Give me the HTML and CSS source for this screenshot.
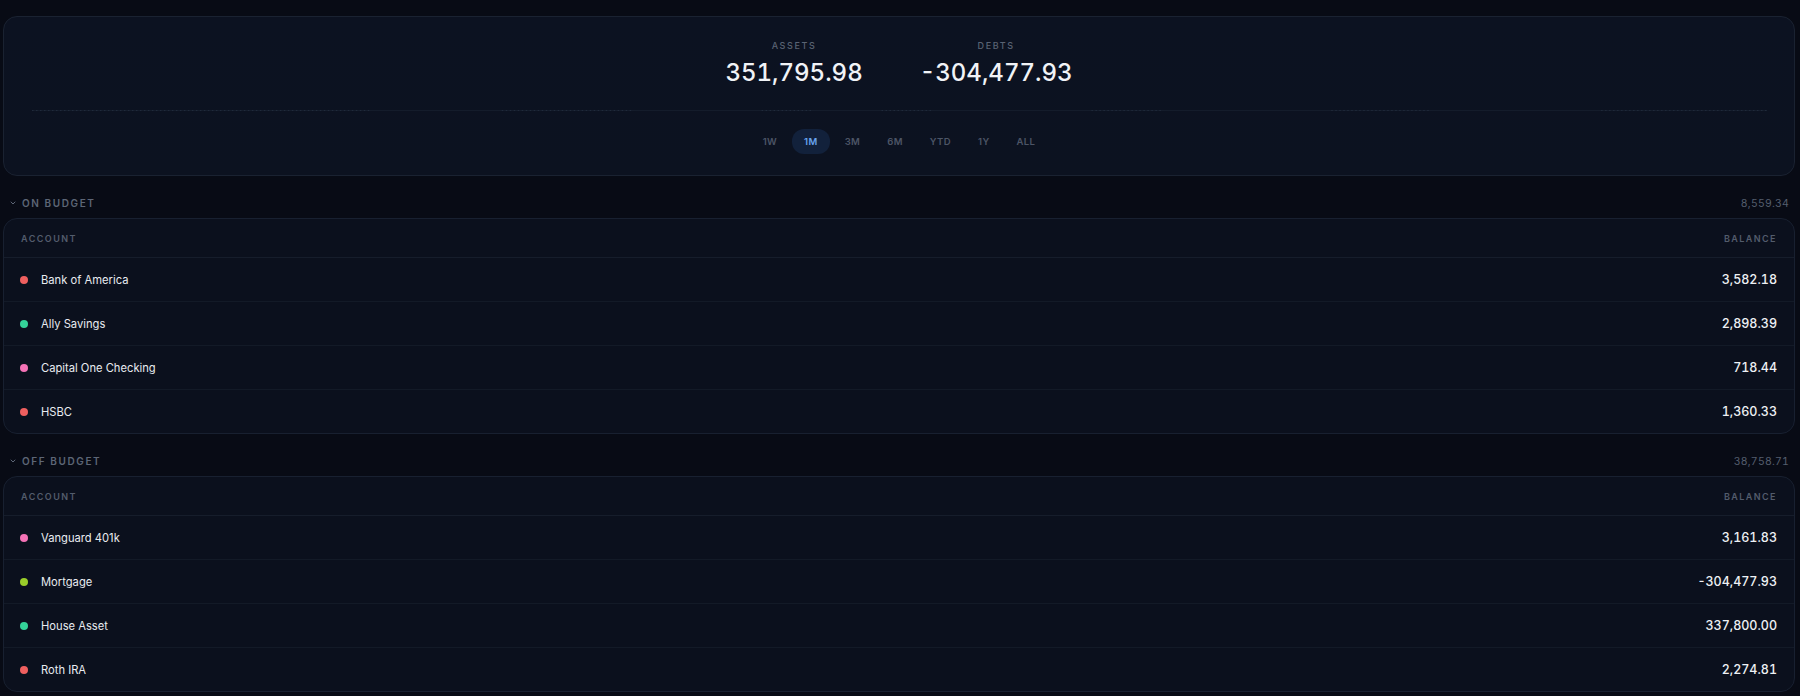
FILE: index.html
```html
<!DOCTYPE html>
<html lang="en">
<head>
<meta charset="utf-8">
<title>Accounts</title>
<link rel="stylesheet" href="styles.css">
</head>
<body>
<main class="page">
  <section class="summary">
    <div class="stats">
      <div class="stat">
        <div class="stat-label">ASSETS</div>
        <div class="stat-value">351,795.98</div>
      </div>
      <div class="stat">
        <div class="stat-label">DEBTS</div>
        <div class="stat-value">-304,477.93</div>
      </div>
    </div>
    <div class="chart">
      <svg class="chart-svg" viewBox="0 0 1736 3" preserveAspectRatio="none">
        <line x1="0" y1="1.5" x2="1736" y2="1.5" class="base"/>
        <line x1="0" y1="1.5" x2="340" y2="1.5" class="dots"/>
        <line x1="470" y1="1.5" x2="600" y2="1.5" class="dots"/>
        <line x1="730" y1="1.5" x2="780" y2="1.5" class="dots"/>
        <line x1="850" y1="1.5" x2="900" y2="1.5" class="dots"/>
        <line x1="1060" y1="1.5" x2="1130" y2="1.5" class="dots"/>
        <line x1="1300" y1="1.5" x2="1400" y2="1.5" class="dots"/>
        <line x1="1570" y1="1.5" x2="1736" y2="1.5" class="dots"/>
      </svg>
    </div>
    <nav class="periods">
      <button class="period">1W</button>
      <button class="period active">1M</button>
      <button class="period">3M</button>
      <button class="period">6M</button>
      <button class="period">YTD</button>
      <button class="period">1Y</button>
      <button class="period">ALL</button>
    </nav>
  </section>

  <section class="group">
    <header class="group-head">
      <div class="group-title">
        <svg class="chev" viewBox="0 0 6 6"><path d="M1 2 L3 4 L5 2"/></svg>
        <span>ON BUDGET</span>
      </div>
      <span class="group-total">8,559.34</span>
    </header>
    <div class="table">
      <div class="thead"><span>ACCOUNT</span><span>BALANCE</span></div>
      <div class="row"><div class="name"><i class="dot red"></i>Bank of America</div><div class="bal">3,582.18</div></div>
      <div class="row"><div class="name"><i class="dot green"></i>Ally Savings</div><div class="bal">2,898.39</div></div>
      <div class="row"><div class="name"><i class="dot pink"></i>Capital One Checking</div><div class="bal">718.44</div></div>
      <div class="row"><div class="name"><i class="dot red"></i>HSBC</div><div class="bal">1,360.33</div></div>
    </div>
  </section>

  <section class="group">
    <header class="group-head">
      <div class="group-title">
        <svg class="chev" viewBox="0 0 6 6"><path d="M1 2 L3 4 L5 2"/></svg>
        <span>OFF BUDGET</span>
      </div>
      <span class="group-total">38,758.71</span>
    </header>
    <div class="table">
      <div class="thead"><span>ACCOUNT</span><span>BALANCE</span></div>
      <div class="row"><div class="name"><i class="dot pink"></i>Vanguard 401k</div><div class="bal">3,161.83</div></div>
      <div class="row"><div class="name"><i class="dot lime"></i>Mortgage</div><div class="bal">-304,477.93</div></div>
      <div class="row"><div class="name"><i class="dot green"></i>House Asset</div><div class="bal">337,800.00</div></div>
      <div class="row"><div class="name"><i class="dot red"></i>Roth IRA</div><div class="bal">2,274.81</div></div>
    </div>
  </section>
</main>
</body>
</html>
```

FILE: styles.css
```css
* { box-sizing: border-box; }
html, body {
  margin: 0;
  background: #080b15;
  color: #e6e9ef;
  font-family: Inter, "Noto Sans", "Liberation Sans", sans-serif;
}
body { overflow: hidden; }
.page {
  padding: 16px 5px 0 3px;
}
.summary {
  height: 160px;
  border: 1px solid #1a2231;
  border-radius: 14px;
  background: linear-gradient(180deg, #0c1221 0%, #0c1220 100%);
  padding-top: 22px;
  display: flex;
  flex-direction: column;
  align-items: stretch;
}
.stats {
  display: flex;
  justify-content: center;
  gap: 57px;
}
.stat {
  display: flex;
  flex-direction: column;
  align-items: center;
}
.stat-label {
  font-size: 9px;
  line-height: 14px;
  letter-spacing: 0.18em;
  font-weight: 500;
  color: #5a6373;
}
.stat-value {
  margin-top: 5px;
  font-size: 24px;
  line-height: 30px;
  font-weight: 500;
  color: #f1f3f7;
  font-variant-numeric: tabular-nums;
}
.chart {
  margin: 21px 27px 0 28px;
  height: 3px;
}
.chart-svg {
  display: block;
  width: 100%;
  height: 3px;
}
.chart-svg .base { stroke: #141c2b; stroke-width: 1; }
.chart-svg .dots { stroke: #202a3b; stroke-width: 1.2; stroke-dasharray: 1.5 2.5; }
.periods {
  margin-top: 17px;
  display: flex;
  justify-content: center;
  gap: 3px;
}
.period {
  font-family: inherit;
  font-size: 9.5px;
  font-weight: 600;
  letter-spacing: 0.04em;
  color: #4c5566;
  background: transparent;
  border: none;
  border-radius: 12px;
  height: 25px;
  padding: 0 12px;
  cursor: pointer;
}
.period.active {
  background: #12213b;
  color: #69a4ee;
}
.group-head {
  margin-top: 19px;
  height: 16px;
  margin-bottom: 7px;
  display: flex;
  align-items: center;
  justify-content: space-between;
  padding: 0 6px 0 7px;
}
.group-title {
  display: flex;
  align-items: center;
  gap: 6px;
  font-size: 10px;
  font-weight: 600;
  letter-spacing: 0.16em;
  color: #5d6676;
}
.chev {
  width: 6px;
  height: 6px;
  fill: none;
  stroke: #5d6676;
  stroke-width: 1;
  stroke-linecap: round;
  stroke-linejoin: round;
}
.group-total {
  font-size: 10.5px;
  color: #555e6e;
  font-variant-numeric: tabular-nums;
  letter-spacing: 0.02em;
}
.table {
  border: 1px solid #182030;
  border-radius: 14px;
  background: #0b101d;
  overflow: hidden;
}
.thead {
  height: 39px;
  display: flex;
  align-items: center;
  justify-content: space-between;
  padding: 0 17px 0 17px;
  font-size: 9px;
  font-weight: 600;
  letter-spacing: 0.16em;
  color: #535c6c;
  border-bottom: 1px solid #161d2b;
}
.row {
  height: 44px;
  display: flex;
  align-items: center;
  justify-content: space-between;
  padding: 0 17px 0 16px;
  border-bottom: 1px solid #131a27;
}
.row:last-child { border-bottom: none; height: 43px; }
.name {
  display: flex;
  align-items: center;
  gap: 13px;
  font-size: 11.2px;
  color: #e8ebf0;
}
.dot {
  width: 8px;
  height: 8px;
  border-radius: 50%;
  display: inline-block;
}
.dot.red { background: #ef5f5f; }
.dot.green { background: #34d399; }
.dot.pink { background: #f472b6; }
.dot.lime { background: #9acd2a; }
.bal {
  font-size: 12.5px;
  font-weight: 500;
  color: #eef0f4;
  font-variant-numeric: tabular-nums;
}
```
